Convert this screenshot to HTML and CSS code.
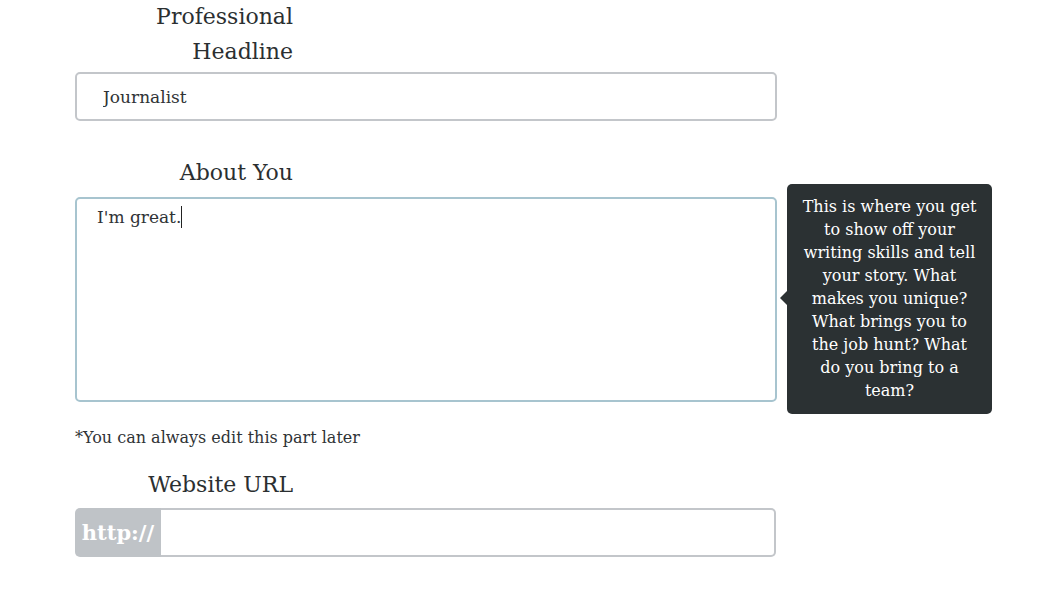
FILE: index.html
```html
<!DOCTYPE html>
<html>
<head>
    <meta charset="UTF-8">
    <title>Profile</title>
    <link rel="stylesheet" href="styles.css">
</head>
<body>
    <form class="profile-form">
        <div class="field">
            <label class="field-label" for="headline">Professional Headline</label>
            <input class="text-input" type="text" id="headline" value="Journalist">
        </div>
        <div class="field field-about">
            <label class="field-label" for="about">About You</label>
            <div class="about-wrap">
                <div class="about-box" id="about">I'm great.<span class="caret"></span></div>
                <div class="tip">This is where you get to show off your writing skills and tell your story. What makes you unique? What brings you to the job hunt? What do you bring to a team?</div>
            </div>
            <p class="note">*You can always edit this part later</p>
        </div>
        <div class="field field-url">
            <label class="field-label" for="url">Website URL</label>
            <div class="url-group">
                <span class="url-addon">http://</span>
                <input class="url-input" type="text" id="url">
            </div>
        </div>
    </form>
</body>
</html>
```

FILE: styles.css
```css
body {
    margin: 0;
    background-color: #ffffff;
    font-family: "DejaVu Serif", "Liberation Serif", serif;
    color: #2f3336;
}
.profile-form {
    width: 702px;
    margin: -1px 0 0 75px;
}
.field {
    display: flex;
    flex-direction: column;
}
.field-label {
    width: 218px;
    text-align: right;
    font-size: 22px;
    line-height: 35px;
    margin-bottom: 3px;
    color: #2b2f31;
}
.text-input {
    box-sizing: border-box;
    height: 49px;
    border: 2px solid #c3c6ca;
    border-radius: 5px;
    padding: 0 26px;
    font-family: inherit;
    font-size: 17px;
    color: #2f3336;
}
.field-about {
    margin-top: 34px;
}
.field-about .field-label {
    margin-bottom: 7px;
}
.about-wrap {
    position: relative;
}
.about-box {
    box-sizing: border-box;
    height: 205px;
    border: 2px solid #a7c4cf;
    border-radius: 5px;
    padding: 6px 20px;
    font-size: 17px;
    line-height: 24px;
}
.caret {
    display: inline-block;
    width: 1px;
    height: 22px;
    background: #222;
    vertical-align: -5px;
}
.tip {
    position: absolute;
    left: 712px;
    top: -13px;
    box-sizing: border-box;
    width: 205px;
    height: 230px;
    padding: 11px 13px;
    background: #2b3133;
    border-radius: 5px;
    color: #ffffff;
    font-size: 16px;
    line-height: 23px;
    text-align: center;
}
.tip::before {
    content: "";
    position: absolute;
    left: -7px;
    top: 107px;
    border-top: 7px solid transparent;
    border-bottom: 7px solid transparent;
    border-right: 7px solid #2b3133;
}
.note {
    margin: 24px 0 0;
    font-size: 16px;
    line-height: 24px;
}
.field-url {
    margin-top: 17px;
}
.field-url .field-label {
    margin-bottom: 6px;
}
.url-group {
    display: flex;
    height: 49px;
    width: 701px;
}
.url-addon {
    display: flex;
    align-items: center;
    justify-content: center;
    width: 86px;
    background: #bfc3c7;
    border-radius: 5px 0 0 5px;
    color: #ffffff;
    font-weight: bold;
    font-size: 21px;
}
.url-input {
    flex: 1;
    box-sizing: border-box;
    border: 2px solid #c3c6ca;
    border-left: none;
    border-radius: 0 5px 5px 0;
    font-family: inherit;
    font-size: 17px;
}
```
